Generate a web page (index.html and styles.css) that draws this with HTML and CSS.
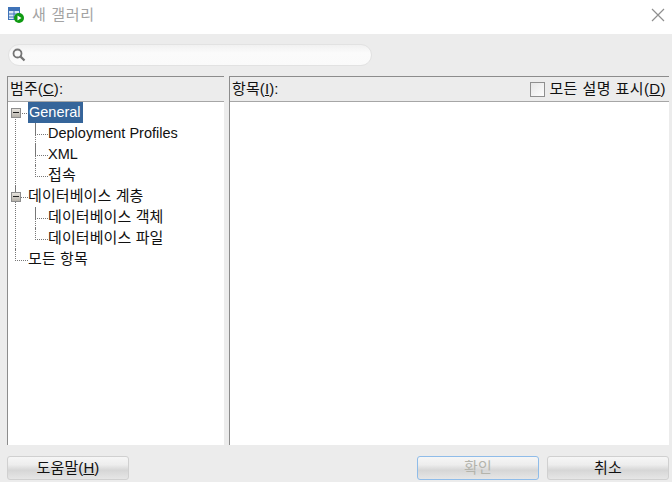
FILE: index.html
```html
<!DOCTYPE html>
<html lang="ko">
<head>
<meta charset="utf-8">
<title>새 갤러리</title>
<link rel="stylesheet" href="styles.css">
</head>
<body>
<div class="window">
  <header class="titlebar">
    <svg class="app-icon" width="16" height="16" viewBox="0 0 16 16">
      <rect x="0.5" y="0.5" width="11" height="12" fill="#dbe8f7" stroke="#3f73b8"/>
      <rect x="1" y="1" width="10" height="3" fill="#3f73b8"/>
      <path d="M1 7h10M1 10h10M6 4v9" stroke="#3f73b8" fill="none"/>
      <circle cx="11" cy="11" r="5" fill="#0f9a12"/>
      <path d="M9.5 8.5l4 2.5-4 2.5z" fill="#fff"/>
    </svg>
    <span class="title">새 갤러리</span>
    <svg class="close" width="14" height="14" viewBox="0 0 14 14">
      <path d="M1 1l12 12M13 1L1 13" stroke="#8f8f8f" stroke-width="1.2" fill="none"/>
    </svg>
  </header>

  <div class="search-row">
    <div class="search">
      <svg width="14" height="14" viewBox="0 0 14 14">
        <circle cx="5.5" cy="5.5" r="4" fill="none" stroke="#757575" stroke-width="1.8"/>
        <path d="M8.6 8.6l3.9 3.9" stroke="#757575" stroke-width="2.2" fill="none"/>
      </svg>
    </div>
  </div>

  <main class="panels">
    <section class="panel panel-left">
      <div class="panel-head"><span>범주(<u>C</u>):</span></div>
      <ul class="tree root">
        <li>
          <span class="expander"></span>
          <span class="node selected latin">General</span>
          <ul class="tree">
            <li><span class="node latin">Deployment Profiles</span></li>
            <li><span class="node latin">XML</span></li>
            <li><span class="node">접속</span></li>
          </ul>
        </li>
        <li>
          <span class="expander"></span>
          <span class="node">데이터베이스 계층</span>
          <ul class="tree">
            <li><span class="node">데이터베이스 객체</span></li>
            <li><span class="node">데이터베이스 파일</span></li>
          </ul>
        </li>
        <li><span class="node">모든 항목</span></li>
      </ul>
    </section>
    <section class="panel panel-right">
      <div class="panel-head">
        <span>항목(<u>I</u>):</span>
        <label class="check"><span class="box"></span><span class="check-text">모든 설명 표시(<u>D</u>)</span></label>
      </div>
    </section>
  </main>

  <footer class="footer">
    <button class="btn btn-help">도움말(<u>H</u>)</button>
    <button class="btn btn-ok">확인</button>
    <button class="btn">취소</button>
  </footer>
</div>
</body>
</html>
```
FILE: styles.css
```css
* { box-sizing: border-box; }
html, body { margin: 0; padding: 0; }
body {
  width: 672px;
  height: 482px;
  overflow: hidden;
  background: #ececec;
  color: #111;
  font: 15px/21px "Liberation Sans", "Noto Sans CJK KR", sans-serif;
  letter-spacing: 0.1px;
}
.window { display: flex; flex-direction: column; height: 482px; }

.titlebar {
  display: flex;
  align-items: center;
  height: 34px;
  flex: none;
  padding: 0 7px 4px 8px;
  background: #fff;
}
.app-icon { flex: none; }
.title {
  margin: 0 0 2px 8px;
  font-size: 15px;
  letter-spacing: 0.7px;
  color: #a3a3a3;
}
.close { margin-left: auto; }

.search-row { flex: none; height: 42px; padding: 10px 0 0 8px; }
.search {
  display: flex;
  align-items: center;
  width: 364px;
  height: 22px;
  padding-left: 3px;
  border: 1px solid #e2e2e2;
  border-radius: 11px;
  background: linear-gradient(#f1f1f1, #fbfbfb 40%, #fafafa);
}

.panels { display: flex; flex: none; height: 369px; padding-left: 7px; gap: 5px; }
.panel {
  background: #fff;
  border-top: 1px solid #8c8c8c;
  border-left: 1px solid #8c8c8c;
}
.panel-left { width: 217px; }
.panel-right { width: 440px; }
.panel-head {
  display: flex;
  align-items: center;
  justify-content: space-between;
  height: 25px;
  padding: 0 3px 2px 2px;
  background: #ececec;
  border-bottom: 1px solid #a6a6a6;
}
.check { display: flex; align-items: center; gap: 4px; }
.check-text { letter-spacing: 0.42px; }
.box {
  width: 15px;
  height: 15px;
  margin-top: 2px;
  border: 1px solid #8f8f8f;
  background: linear-gradient(135deg, #e6e6e6, #fdfdfd);
}

.tree { list-style: none; margin: 0 0 0 7px; padding: 0; }
.tree.root { margin-left: 7px; }
.tree li { position: relative; padding-left: 13px; }
.tree li::before {
  content: "";
  position: absolute;
  left: 0;
  top: 0;
  width: 12px;
  height: 11px;
  border-left: 1px dotted #777;
  border-bottom: 1px dotted #777;
}
.tree li:not(:last-child)::after {
  content: "";
  position: absolute;
  left: 0;
  top: 0;
  bottom: 0;
  border-left: 1px dotted #777;
}
.root > li:first-child::before { border-left: 0; }
.root > li:first-child::after { top: 11px; }
.node { display: inline-block; height: 21px; line-height: 19px; vertical-align: top; white-space: nowrap; }
.latin { font-size: 14.5px; line-height: 21px; letter-spacing: 0; }
.selected { padding: 0 2px 0 1px; background: #35659a; color: #fff; }
.expander {
  position: absolute;
  z-index: 1;
  left: -4px;
  top: 6px;
  width: 10px;
  height: 10px;
  border: 1px solid #8d8d8d;
  background: linear-gradient(#e9e6e0, #b5b1a9);
}
.expander::after {
  content: "";
  display: block;
  width: 6px;
  height: 1px;
  margin: 3px 1px;
  background: #222;
}

.footer {
  display: flex;
  flex: none;
  height: 37px;
  padding: 11px 3px 2px 7px;
  gap: 8px;
}
.btn {
  width: 122px;
  height: 24px;
  padding: 0 0 2px;
  font: inherit;
  letter-spacing: inherit;
  color: #111;
  border: 1px solid #d0d0d0;
  border-radius: 3px;
  background: linear-gradient(#f6f6f6, #ededed 35%, #d6d6d6 60%, #e6e6e6);
}
.btn-help { margin-right: auto; }
.btn-ok { border-color: #8fbce9; color: #b4b4ac; }
u { text-underline-offset: 1px; }
```
